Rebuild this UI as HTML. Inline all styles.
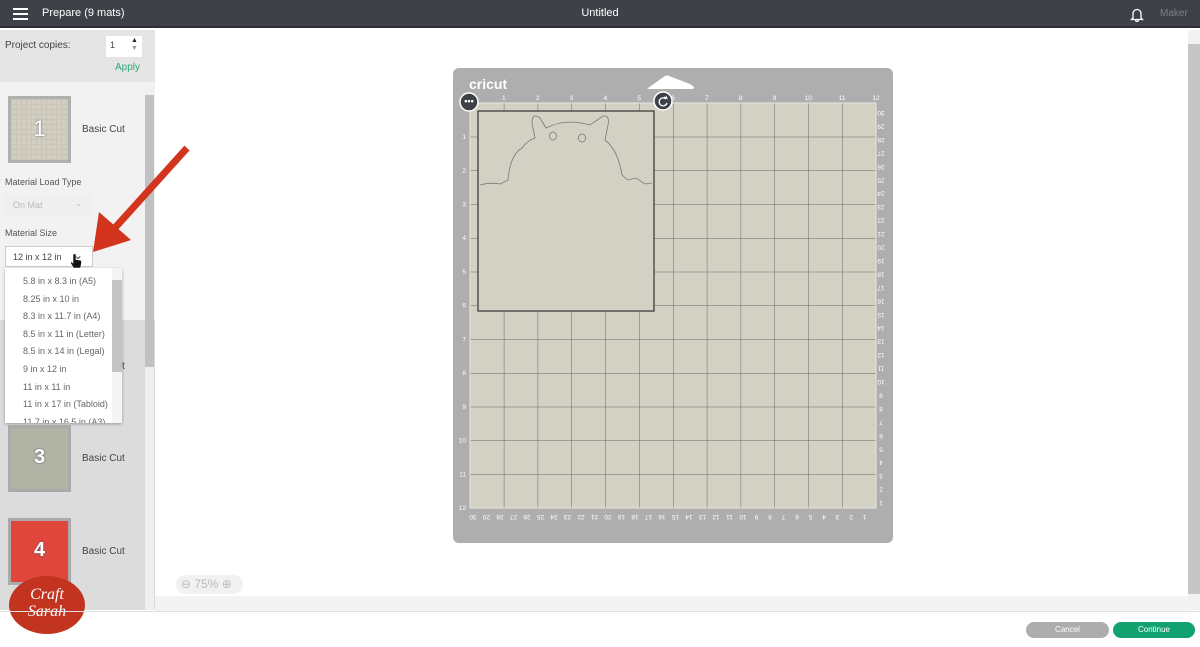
<!DOCTYPE html>
<html><head><meta charset="utf-8"><style>
*{margin:0;padding:0;box-sizing:border-box}
body{width:1200px;height:647px;overflow:hidden;position:relative;background:#fff;font-family:"Liberation Sans",sans-serif;color:#444}
.a{position:absolute}
</style></head><body>
<div class="a" style="left:0;top:0;width:1200px;height:28px;background:#3e4148;border-bottom:2px solid #2c2e33"></div>
<div class="a" style="left:13px;top:8px;width:15px;height:2px;background:#fff;box-shadow:0 5px 0 #fff,0 10px 0 #fff"></div>
<div class="a" style="left:42px;top:7px;font-size:11px;color:#fff">Prepare (9 mats)</div>
<div class="a" style="left:0;width:1200px;top:7px;text-align:center;font-size:11px;color:#fff">Untitled</div>
<svg class="a" style="left:1130px;top:7px" width="14" height="15" viewBox="0 0 14 15"><path d="M3 11V6.5a4 4 0 0 1 8 0V11l1.5 1.5h-11z M5.5 13a1.5 1.5 0 0 0 3 0" fill="none" stroke="#fff" stroke-width="1.3"/></svg>
<div class="a" style="left:1160px;top:8px;font-size:10px;color:#7c7f85">Maker</div>

<div class="a" style="left:0;top:30px;width:155px;height:52px;background:#e5e5e5"></div>
<div class="a" style="left:5px;top:40px;font-size:10px;color:#444">Project copies:</div>
<div class="a" style="left:106px;top:36px;width:36px;height:21px;background:#fff;font-size:9px;padding:4px 0 0 4px">1</div>
<div class="a" style="left:131px;top:37px;font-size:7px;line-height:8px;color:#222">▲<br><span style="color:#999">▼</span></div>
<div class="a" style="left:115px;top:62px;font-size:10px;color:#2eaa78">Apply</div>
<div class="a" style="left:0;top:82px;width:155px;height:238px;background:#f2f2f2"></div>
<div class="a" style="left:0;top:320px;width:155px;height:290px;background:#dcdcdc"></div>
<div class="a" style="left:145px;top:88px;width:9px;height:522px;background:#f0f0f0"></div>
<div class="a" style="left:145px;top:95px;width:9px;height:272px;background:#c1c1c1"></div>
<div class="a" style="left:8px;top:96px;width:63px;height:67px;background:#d2cfc2;border:3px solid #b0b0b0;background-image:linear-gradient(#c8c5b8 1px,transparent 1px),linear-gradient(90deg,#c8c5b8 1px,transparent 1px);background-size:5px 5px"></div>
<div class="a" style="left:8px;top:116px;width:63px;text-align:center;font-size:22px;color:#fff;text-shadow:0 0 2px #666">1</div>
<div class="a" style="left:82px;top:124px;font-size:10px">Basic Cut</div>
<div class="a" style="left:5px;top:177px;font-size:9px;color:#555">Material Load Type</div>
<div class="a" style="left:5px;top:195px;width:87px;height:20px;background:#efefef;font-size:9px;color:#bbb;padding:5px 0 0 8px">On Mat<span style="position:absolute;left:70px;top:3px">⌄</span></div>
<div class="a" style="left:5px;top:228px;font-size:9px;color:#555">Material Size</div>
<div class="a" style="left:5px;top:246px;width:88px;height:21px;background:#fff;border:1px solid #ccc;font-size:9px;color:#444;padding:5px 0 0 7px">12 in x 12 in<span style="position:absolute;left:67px;top:1px;font-size:12px">⌄</span></div>
<div class="a" style="left:5px;top:268px;width:117px;height:155px;background:#fff;box-shadow:0 1px 3px rgba(0,0,0,.3);overflow:hidden"><div style="position:absolute;left:18px;top:5px;font-size:9px;line-height:17.6px;color:#666;white-space:nowrap">5.8 in x 8.3 in (A5)<br>8.25 in x 10 in<br>8.3 in x 11.7 in (A4)<br>8.5 in x 11 in (Letter)<br>8.5 in x 14 in (Legal)<br>9 in x 12 in<br>11 in x 11 in<br>11 in x 17 in (Tabloid)<br>11.7 in x 16.5 in (A3)</div><div style="position:absolute;left:107px;top:0;width:10px;height:155px;background:#f4f4f4"></div><div style="position:absolute;left:107px;top:12px;width:10px;height:92px;background:#c4c4c4"></div></div>
<div class="a" style="left:122px;top:361px;font-size:10px">t</div>
<div class="a" style="left:8px;top:425px;width:63px;height:67px;background:#b1b3a5;border:3px solid #aaa"></div>
<div class="a" style="left:8px;top:446px;width:63px;text-align:center;font-size:20px;font-weight:bold;color:#fff;text-shadow:0 0 2px #555">3</div>
<div class="a" style="left:82px;top:453px;font-size:10px">Basic Cut</div>
<div class="a" style="left:8px;top:518px;width:63px;height:67px;background:#e0463b;border:3px solid #aaa"></div>
<div class="a" style="left:8px;top:539px;width:63px;text-align:center;font-size:20px;font-weight:bold;color:#fff;text-shadow:0 0 2px #555">4</div>
<div class="a" style="left:82px;top:546px;font-size:10px">Basic Cut</div>
<div class="a" style="left:9px;top:576px;width:76px;height:58px;border-radius:50%;background:#c2341f;color:#fff;font-family:'Liberation Serif',serif;font-style:italic;font-size:16px;line-height:17px;text-align:center;padding-top:10px">Craft<br>Sarah</div>
<svg class="a" style="left:85px;top:140px" width="110" height="120"><line x1="102" y1="8" x2="28" y2="90" stroke="#d2341e" stroke-width="7"/><polygon points="8,112 14,72 46,100" fill="#d2341e"/></svg>
<svg class="a" style="left:70px;top:253px" width="12" height="16" viewBox="0 0 12 16"><path d="M3 1v9L1 8.5 0.5 10l3 5h7l1-5V7.5L9 7 6 6.5V1z" fill="#111" stroke="#fff" stroke-width="0.6"/></svg>

<div class="a" style="left:1188px;top:30px;width:12px;height:580px;background:#f2f2f2"></div>
<div class="a" style="left:1188px;top:44px;width:12px;height:550px;background:#c6c6c6"></div>
<div class="a" style="left:155px;top:596px;width:1033px;height:15px;background:#f3f3f3"></div>
<div class="a" style="left:0;top:611px;width:1200px;height:1px;background:#e0e0e0"></div>
<div class="a" style="left:176px;top:575px;width:67px;height:19px;border-radius:10px;background:#f1f1f1;font-size:12px;color:#bbb;padding:2px 0 0 5px">⊖ 75% ⊕</div>
<div class="a" style="left:1026px;top:622px;width:83px;height:16px;border-radius:8px;background:#adadad;color:#fff;font-size:8px;text-align:center;line-height:16px">Cancel</div>
<div class="a" style="left:1113px;top:622px;width:82px;height:16px;border-radius:8px;background:#12a26f;color:#fff;font-size:8px;text-align:center;line-height:16px">Continue</div>

<svg class="a" style="left:453px;top:68px" width="440" height="475" viewBox="453 68 440 475">
<defs><pattern id="g" x="470" y="103" width="33.83" height="33.75" patternUnits="userSpaceOnUse"><path d="M0 0V33.75M0 0H33.83" stroke="#6a675e" stroke-width="1" fill="none"/></pattern></defs>
<rect x="453" y="68" width="440" height="475" rx="6" fill="#aeaeae"/>
<path d="M648 88 L665 76 Q667 75 669 76 L690 84 Q697 88 692 89 L652 89 Q645 89 648 88z" fill="#fff"/>
<text x="469" y="89" font-family="Liberation Sans" font-weight="bold" font-size="14" fill="#fff">cricut</text>
<rect x="470" y="103" width="406" height="405" fill="#d3d0c4"/>
<rect x="470" y="103" width="406" height="405" fill="url(#g)"/>
<rect x="470" y="103" width="406" height="405" fill="none" stroke="#e8e6df" stroke-width="1"/>
<rect x="478" y="111" width="176" height="200" fill="#d3d0c4" stroke="#333" stroke-width="1.2"/>
<path d="M480 185 Q490 182 500 184 L508 180 Q510 155 522 148 Q528 140 535 138 L532 123 Q532 112 540 118 L546 128 Q565 118 590 125 L603 116 Q610 115 608 125 L605 140 Q618 150 622 175 L628 180 L636 178 L645 184 L652 183" fill="none" stroke="#7c786e" stroke-width="0.8"/>
<ellipse cx="553" cy="136" rx="3.5" ry="4" fill="none" stroke="#7c786e" stroke-width="0.8"/>
<ellipse cx="582" cy="138" rx="3.5" ry="4" fill="none" stroke="#7c786e" stroke-width="0.8"/>
<g font-family="Liberation Sans" font-size="6.5" fill="#fff" id="lbl"></g>
<circle cx="469" cy="102" r="9" fill="#3e4148" stroke="#fff" stroke-width="1.5"/>
<text x="469" y="104" text-anchor="middle" fill="#fff" font-size="9" font-weight="bold" font-family="Liberation Sans">•••</text>
<circle cx="663" cy="101" r="9" fill="#3e4148" stroke="#fff" stroke-width="1.5"/>
<path d="M666 99 A4 4 0 1 0 667 103" fill="none" stroke="#fff" stroke-width="1.3"/><path d="M664 97 L667 98.5 L666 96" fill="none" stroke="#fff" stroke-width="1"/>
</svg>
<script>
var g=document.getElementById('lbl'),s='',i;
for(i=1;i<=12;i++){s+='<text x="'+(470+i*33.83)+'" y="100" text-anchor="middle">'+i+'</text>';s+='<text x="466" y="'+(105+i*33.75)+'" text-anchor="end">'+i+'</text>';}
for(i=1;i<=30;i++){var x=473+(30-i)*13.5;s+='<text transform="translate('+x+',515) rotate(180)" text-anchor="middle">'+i+'</text>';var y=111+(30-i)*13.45;s+='<text transform="translate(881,'+y+') rotate(180)" text-anchor="middle">'+i+'</text>';}
g.innerHTML=s;
</script>
</body></html>
